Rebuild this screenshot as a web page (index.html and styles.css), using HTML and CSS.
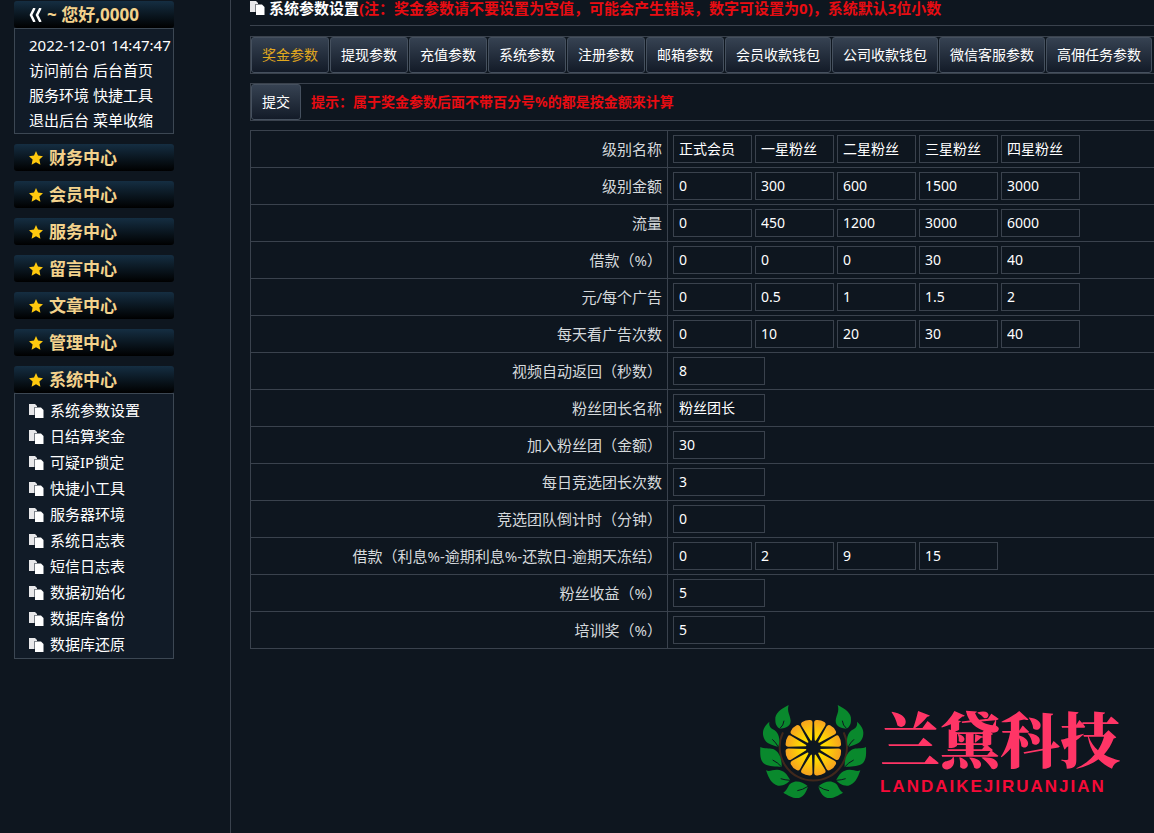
FILE: index.html
```html
<!DOCTYPE html>
<html lang="zh-CN">
<head>
<meta charset="utf-8">
<title>系统参数设置</title>
<link rel="stylesheet" href="styles.css">
</head>
<body>
<svg class="defs" aria-hidden="true">
  <symbol id="star" viewBox="0 0 14 14"><path d="M7 0 9 4.500 14 5.200 10.400 8.600 11.400 13.700 7 11.200 2.600 13.700 3.600 8.600 0 5.200 5 4.500Z" fill="#ffc90e"/></symbol>
  <symbol id="pages" viewBox="0 0 15 15"><path d="M0 1H6L8 3V4H5.500V12H0Z" fill="#e8e8ea"/><path d="M6 4.500H12L14.500 7V15H6Z" fill="#fff"/></symbol>
</svg>
<div class="layout">
  <aside class="sidebar">
    <section>
      <h2 class="heading greeting"><svg class="back" viewBox="0 0 13 14"><path d="M5.500 0 2 7 5.500 14M11.500 0 8 7 11.500 14" fill="none" stroke="#fff" stroke-width="2.500"/></svg><span>~ 您好,0000</span></h2>
      <div class="panel info">
        <time>2022-12-01 14:47:47</time>
        <div><a href="#">访问前台</a> <a href="#">后台首页</a></div>
        <div><a href="#">服务环境</a> <a href="#">快捷工具</a></div>
        <div><a href="#">退出后台</a> <a href="#">菜单收缩</a></div>
      </div>
    </section>
    <h2 class="heading"><svg class="star"><use href="#star"/></svg><span>财务中心</span></h2>
    <h2 class="heading"><svg class="star"><use href="#star"/></svg><span>会员中心</span></h2>
    <h2 class="heading"><svg class="star"><use href="#star"/></svg><span>服务中心</span></h2>
    <h2 class="heading"><svg class="star"><use href="#star"/></svg><span>留言中心</span></h2>
    <h2 class="heading"><svg class="star"><use href="#star"/></svg><span>文章中心</span></h2>
    <h2 class="heading"><svg class="star"><use href="#star"/></svg><span>管理中心</span></h2>
    <section>
      <h2 class="heading"><svg class="star"><use href="#star"/></svg><span>系统中心</span></h2>
      <nav class="panel menu">
        <a href="#"><svg class="pages"><use href="#pages"/></svg>系统参数设置</a>
        <a href="#"><svg class="pages"><use href="#pages"/></svg>日结算奖金</a>
        <a href="#"><svg class="pages"><use href="#pages"/></svg>可疑IP锁定</a>
        <a href="#"><svg class="pages"><use href="#pages"/></svg>快捷小工具</a>
        <a href="#"><svg class="pages"><use href="#pages"/></svg>服务器环境</a>
        <a href="#"><svg class="pages"><use href="#pages"/></svg>系统日志表</a>
        <a href="#"><svg class="pages"><use href="#pages"/></svg>短信日志表</a>
        <a href="#"><svg class="pages"><use href="#pages"/></svg>数据初始化</a>
        <a href="#"><svg class="pages"><use href="#pages"/></svg>数据库备份</a>
        <a href="#"><svg class="pages"><use href="#pages"/></svg>数据库还原</a>
      </nav>
    </section>
  </aside>
  <main class="main">
    <h1 class="title"><svg class="pages"><use href="#pages"/></svg><span>系统参数设置<span class="red">(注：奖金参数请不要设置为空值，可能会产生错误，数字可设置为0)，系统默认3位小数</span></span></h1>
    <div class="bar tabs">
      <button class="btn active">奖金参数</button><button class="btn">提现参数</button><button class="btn">充值参数</button><button class="btn">系统参数</button><button class="btn">注册参数</button><button class="btn">邮箱参数</button><button class="btn">会员收款钱包</button><button class="btn">公司收款钱包</button><button class="btn">微信客服参数</button><button class="btn">高佣任务参数</button>
    </div>
    <form>
      <div class="bar"><button class="btn" type="button">提交</button><strong class="hint red">提示：属于奖金参数后面不带百分号%的都是按金额来计算</strong></div>
      <table class="params"><tbody id="rows"></tbody></table>
    </form>
    <div class="brand">
      <svg class="emblem" viewBox="0 0 360 315">
        <defs>
          <radialGradient id="juice" gradientUnits="userSpaceOnUse" cx="178" cy="149" r="86"><stop offset=".4" stop-color="#ffdc00"/><stop offset="1" stop-color="#f6a020"/></radialGradient>
          <g id="leaves">
            <g fill="#09892d">
              <path d="M104 21C82 32 62 45 64 66 64 80 70 88 77 92 90 90 110 88 110 68 108 50 98 40 104 21Z"/>
              <path d="M46 71C30 85 24 98 28 115 32 133 45 140 73 147 80 125 74 105 62 97 50 90 44 85 46 71Z"/>
              <path d="M19 147C18 170 18 190 33 199 45 206 65 206 83 207 84 185 78 165 62 155 48 148 32 154 19 147Z"/>
              <path d="M36 217C44 240 52 258 72 263 88 265 100 256 109 247 100 228 88 216 70 215 56 214 48 222 36 217Z"/>
              <path d="M88 284C102 292 115 302 135 300 150 296 158 280 162 265 145 250 125 246 112 255 100 262 102 276 88 284Z"/>
            </g>
            <path d="M77 92Q89 82 90 68M73 147Q66 134 55 124M83 207Q72 194 56 186M109 247Q92 246 80 242M162 265Q145 276 130 278" fill="none" stroke="#0e161f" stroke-width="3"/>
          </g>
        </defs>
        <path d="M87 103A101 101 0 1 0 269 103" fill="none" stroke="#40281c" stroke-width="6"/>
        <g id="wedges" fill="url(#juice)"></g>
        <use href="#leaves"/>
        <use href="#leaves" transform="translate(355 0) scale(-1 1)"/>
      </svg>
      <div class="brand-text"><div class="brand-name">兰黛科技</div><div class="brand-latin">LANDAIKEJIRUANJIAN</div></div>
    </div>
  </main>
</div>
<script src="app.js"></script>
</body>
</html>
```
FILE: styles.css
```css
* { box-sizing: border-box; }
body { margin: 0; background: #0e161f; color: #fff; font: 15px "Noto Sans", "Noto Sans CJK SC", sans-serif; overflow-x: hidden; }
a { color: inherit; text-decoration: none; }
.defs { position: absolute; width: 0; height: 0; }
.layout { display: flex; min-height: 100vh; }
.sidebar { flex: none; width: 231px; padding: 1px 56px 0 14px; border-right: 1px solid #3a424d; display: flex; flex-direction: column; gap: 10px; }
.heading { display: flex; align-items: center; gap: 6px; margin: 0; height: 27px; padding-left: 15px; border-radius: 3px; background: linear-gradient(#152e42, #000); font-size: 17px; line-height: 27px; color: #f3d28c; }
.greeting { gap: 5px; }
.back { width: 13px; height: 14px; }
.star { width: 14px; height: 14px; }
.pages { flex: none; width: 15px; height: 15px; }
.panel { border: 1px solid #3c4753; background: #111b27; padding-left: 14px; }
.info { padding-top: 4px; line-height: 25px; white-space: nowrap; }
.info time { display: block; }
.menu { padding-top: 3px; padding-bottom: 1px; }
.menu a { display: flex; align-items: center; gap: 6px; height: 26px; line-height: 26px; }
.main { flex: 1; min-width: 0; padding-left: 19px; }
.title { display: flex; align-items: center; gap: 4px; height: 26px; margin: 0 0 10px; padding-bottom: 10px; border-bottom: 1px solid #3a424d; font-size: 15px; line-height: 16px; white-space: nowrap; }
.red { color: #e80c12; }
.bar { display: flex; align-items: center; height: 38px; margin-bottom: 9px; border: 1px solid #3a424d; border-width: 1px 0 1px 1px; }
.tabs { gap: 1px; }
.btn { flex: none; height: 36px; padding: 0 10px 2px; border: 1px solid #45505e; border-radius: 3px; background: linear-gradient(#364252, #131b28); color: #fff; font: 14px "Noto Sans", "Noto Sans CJK SC", sans-serif; white-space: nowrap; }
.active { color: #e0a81e; }
.hint { margin-left: 10px; padding-bottom: 2px; font-size: 14px; white-space: nowrap; }
.params { width: 100%; border-collapse: collapse; }
.params th, .params td { height: 37px; padding: 0 5px; border: 1px solid #3a424d; }
.params td { border-right: 0; }
.params th { width: 417px; padding: 0 5px 2px; text-align: right; font-weight: 400; color: #d5d9dc; }
.fields { display: flex; gap: 3px; }
.fields input { width: 79px; height: 28px; padding: 0 5px 2px; border: 1px solid #3a424d; background: transparent; color: #fff; font: 14px "Noto Sans", "Noto Sans CJK SC", sans-serif; }
.fields .single { width: 92px; }
.brand { display: flex; align-items: center; justify-content: flex-end; gap: 6px; margin: 49px 34px 0 0; }
.emblem { width: 120px; height: 105px; }
.brand-name { font: 900 60px/64px "Noto Serif CJK SC", "Noto Sans CJK SC", serif; color: #ff3566; }
.brand-latin { margin-top: 8px; font: 700 17px/20px "Liberation Sans", sans-serif; color: #f50a38; letter-spacing: 2px; }
```
FILE: app.js
```javascript
const rows = [
  ["级别名称", ["正式会员", "一星粉丝", "二星粉丝", "三星粉丝", "四星粉丝"]],
  ["级别金额", [0, 300, 600, 1500, 3000]],
  ["流量", [0, 450, 1200, 3000, 6000]],
  ["借款（%）", [0, 0, 0, 30, 40]],
  ["元/每个广告", [0, 0.5, 1, 1.5, 2]],
  ["每天看广告次数", [0, 10, 20, 30, 40]],
  ["视频自动返回（秒数）", [8]],
  ["粉丝团长名称", ["粉丝团长"]],
  ["加入粉丝团（金额）", [30]],
  ["每日竞选团长次数", [3]],
  ["竞选团队倒计时（分钟）", [0]],
  ["借款（利息%-逾期利息%-还款日-逾期天冻结）", [0, 2, 9, 15]],
  ["粉丝收益（%）", [5]],
  ["培训奖（%）", [5]]
];
document.getElementById("rows").innerHTML = rows.map(([label, values], r) => {
  const inputs = values.map((v, i) =>
    `<input id="f${r}-${i}" type="text" class="${values.length === 1 ? "single" : "multi"}" value="${v}" aria-label="${label} ${i + 1}">`
  ).join("");
  return `<tr><th scope="row"><label for="f${r}-0">${label}</label></th><td><div class="fields">${inputs}</div></td></tr>`;
}).join("");

// Twelve citrus segments around the hub.
document.getElementById("wedges").innerHTML = Array.from({ length: 12 }, (_, i) =>
  `<path d="M176 126 161 76Q159 68 166 66 178 62 190 66 197 68 195 76L180 126Q178 129 176 126Z" transform="rotate(${i * 30 + 15} 178 149)"/>`
).join("");
```
